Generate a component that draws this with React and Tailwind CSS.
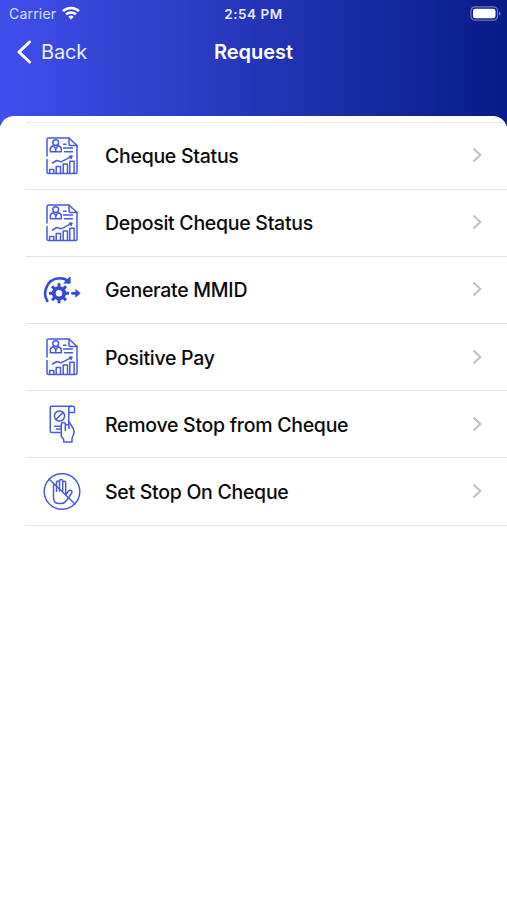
import React from "react";

const iconProps = {
  width: 40,
  height: 40,
  viewBox: "0 0 40 40",
  fill: "none",
  stroke: "currentColor",
  strokeLinecap: "round",
  strokeLinejoin: "round",
};

function ReportIcon() {
  return (
    <svg {...iconProps} strokeWidth="1.500">
      <path d="M5 20V3.500Q5 2 6.500 2H27l8 7.500V36q0 1.500-1.500 1.500H6.500Q5 37.500 5 36V23.500" />
      <path d="M27 2v6q0 1.500 1.500 1.500H35" />
      <circle cx="13.700" cy="6.600" r="2.900" />
      <path d="M11.500 9.700Q8.300 10.500 8.300 13v2.700h11V13q0-2.500-3.200-3.300l-2.300 3-2.300-3M13.800 12.500v3" />
      <path d="M21.500 8.300h2.500M21.500 12h9M22.500 15.800h8" />
      <path d="M10.500 27l4.200-2.500 4.300 1.300 10.800-5.500M27.500 20.200l2.500-.1-1 2.300" />
      <path d="M7.600 37v-3.500h4.200V37M14.200 37v-6.500h4.300V37M21.200 37v-9h4.300v9M27.800 37V25.300h4.300V37" />
    </svg>
  );
}

function GenerateIcon() {
  return (
    <svg {...iconProps} className="text-[#3648dc]">
      <path d="M5.300 31A14.500 14.500 0 0 1 4 18.500Q7.500 8.300 18 8.300q5 0 8.300 3" strokeWidth="2.600" />
      <path d="M28 7.300l.2 5.900-6-.2z" fill="currentColor" strokeWidth="1" />
      <circle cx="17" cy="23.300" r="5.200" strokeWidth="3.900" />
      <path
        d="M17 13.300v4M17 29.300v4M7 23.300h4M23 23.300h4M10 16.300l2.800 2.800M21.200 27.500l2.800 2.800M10 30.300l2.800-2.800M21.200 19.100l2.800-2.800"
        strokeWidth="3"
        strokeLinecap="butt"
      />
      <path d="M30.500 23.300h5" strokeWidth="2.800" />
      <path d="M34 19.800l4.200 3.500-4.200 3.500z" fill="currentColor" strokeWidth=".8" />
    </svg>
  );
}

function RemoveStopIcon() {
  return (
    <svg {...iconProps} strokeWidth="1.500">
      <path d="M19 28.500H9.500Q8.300 28.500 8.300 27V3.700q0-1.500 1.500-1.500h20.700q2 0 2 2v4.300h-5.700" />
      <path d="M29 2.200q-2.200 0-2.200 2.200v16.300" />
      <circle cx="17.500" cy="12" r="5.100" />
      <path d="M13.900 15.500l7.200-7M12.700 22.300h6M14.700 25h4" />
      <path d="M23.300 26.500V20.500q0-1.900-2-1.900t-2 1.900v9.500l-.2 2 2.600 3.500V38h8.300v-3.500l2-5.500q.3-2.500-.8-4.500l-4.100-6.500M23.300 22q.3-1.700 1.900-1.600 1.700.2 1.800 2v2" />
    </svg>
  );
}

function SetStopIcon() {
  return (
    <svg {...iconProps} strokeWidth="1.500">
      <circle cx="20" cy="19.500" r="17.800" />
      <path d="M7 7l26 25" />
      <path d="M11.500 25V14q0-1.500 1.500-1.500t1.500 1.500v5.500V10.500Q14.500 9 16 9t1.500 1.500V19V9q0-1.600 1.600-1.600T20.700 9v10V10.800q0-1.500 1.500-1.500t1.500 1.500v12l2.600-3.600q1.300-1.600 3-.6 1.300.9.300 2.700l-5.300 7.500q-2 2.800-5 2.800h-2.200q-5.600 0-5.600-6.600z" />
    </svg>
  );
}

function Chevron() {
  return (
    <svg width="10" height="16" viewBox="0 0 10 16" fill="none" stroke="#c3c3c5" strokeWidth="2.200" className="-mt-px ml-auto">
      <path d="M1.500 1.500L8.200 8l-6.700 6.500" />
    </svg>
  );
}

function StatusBar() {
  return (
    <div className="grid h-7 grid-cols-3 items-center text-[14px] leading-7">
      <div className="flex items-center gap-[6px] pl-[9px] text-white/80">
        <span className="tracking-[0.2px]">Carrier</span>
        <svg width="18" height="14" viewBox="0 0 18 14" fill="none" stroke="#fff" strokeWidth="2.500" className="-mt-[2px]">
          <path d="M1 5.200a11.500 11.500 0 0 1 16 0M4 8.400a7.200 7.200 0 0 1 10 0" />
          <path d="M9 13.500l-2.700-2.800a4 4 0 0 1 5.400 0z" fill="#fff" stroke="none" />
        </svg>
      </div>
      <span className="text-center text-[13.500px] font-semibold tracking-[0.500px] text-white/90">2:54 PM</span>
      <svg width="32" height="15" viewBox="0 0 32 15" className="mr-[5px] -mt-px ml-auto">
        <rect x="1" y=".8" width="26.500" height="13.400" rx="4" fill="none" stroke="#fff" strokeOpacity=".4" strokeWidth="1.200" />
        <rect x="3" y="2.800" width="22.500" height="9.400" rx="2.200" fill="#fff" />
        <path d="M29 5.200q3 2.300 0 4.600z" fill="#fff" fillOpacity=".45" />
      </svg>
    </div>
  );
}

const items = [
  { label: "Cheque Status", Icon: ReportIcon },
  { label: "Deposit Cheque Status", Icon: ReportIcon },
  { label: "Generate MMID", Icon: GenerateIcon },
  { label: "Positive Pay", Icon: ReportIcon },
  { label: "Remove Stop from Cheque", Icon: RemoveStopIcon },
  { label: "Set Stop On Cheque", Icon: SetStopIcon },
];

export default function App() {
  return (
    <div className="flex h-[900px] w-[507px] flex-col overflow-hidden bg-linear-to-r from-[#404fec] via-[#2436b8] to-[#081b86] bg-[length:100%_126px] bg-no-repeat font-['Inter','Liberation_Sans',sans-serif]">
      <header className="h-[115.500px] shrink-0">
        <StatusBar />
        <div className="grid h-[48px] grid-cols-3 items-center">
          <button className="flex items-center gap-[9px] pl-4 text-[20px] tracking-[-0.200px] text-white/90">
            <svg width="16" height="24" viewBox="0 0 16 24" fill="none" stroke="#fff" strokeWidth="3" strokeLinecap="round" strokeLinejoin="round">
              <path d="M13.500 2L3 12l10.500 10" />
            </svg>
            Back
          </button>
          <h1 className="text-center text-[20px] font-semibold text-white">Request</h1>
        </div>
      </header>

      <main className="flex-1 overflow-hidden rounded-t-[14px] bg-white pt-[6px]">
        <ul className="ml-[26px] border-t border-[#ececec]">
          {items.map(({ label, Icon }) => (
            <li key={label} className="flex h-[67.200px] items-center border-b border-[#e4e4e6] pr-[25px] pl-4">
              <span className="text-[#4a59e0]">
                <Icon />
              </span>
              <span className="ml-[23px] pt-[2px] text-[19.500px] font-medium tracking-[-0.280px] text-[#0b0b0c]">{label}</span>
              <Chevron />
            </li>
          ))}
        </ul>
      </main>
    </div>
  );
}
